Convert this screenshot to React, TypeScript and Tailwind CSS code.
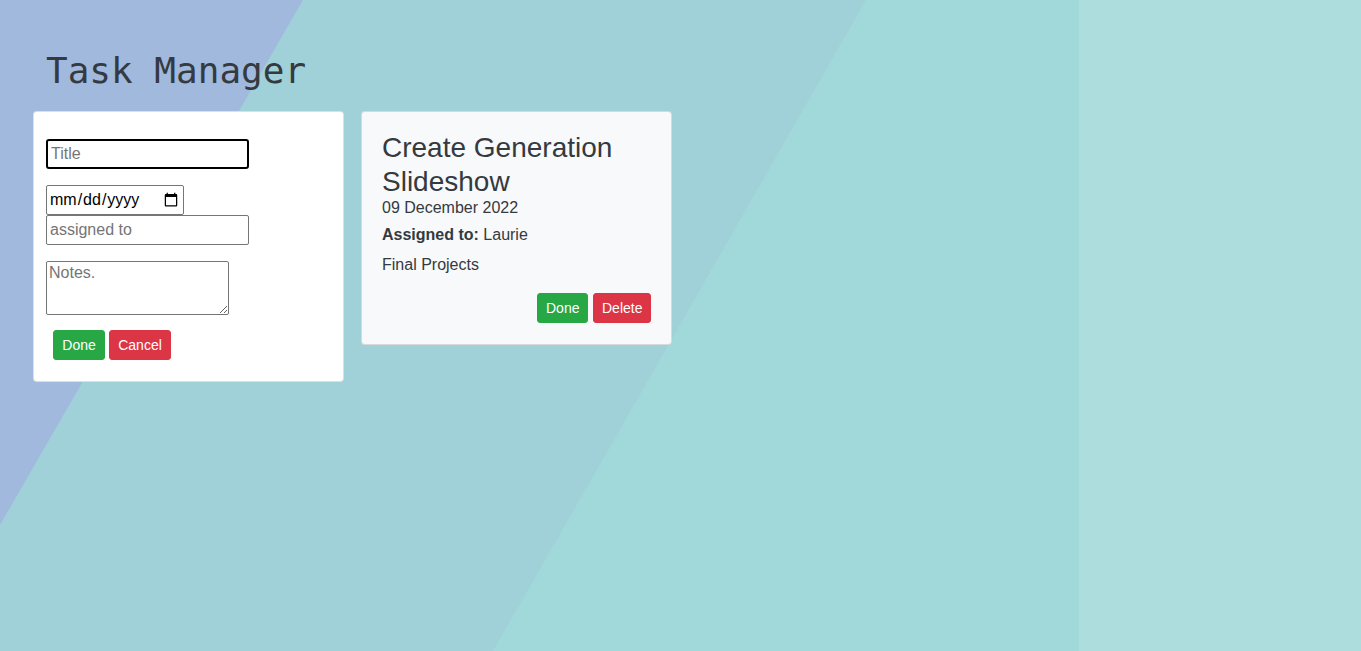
import React from 'react';

function Backdrop() {
  return (
    <svg
      className="absolute inset-0 -z-10 h-full w-full"
      viewBox="0 0 1361 651"
      preserveAspectRatio="none"
    >
      <rect x="0" y="0" width="1361" height="651" fill="#a1d8d9" />
      <polygon points="303,0 866,0 493,651 0,651 0,525" fill="#a0d1d9" />
      <polygon points="0,0 303,0 0,525" fill="#a0b9dd" />
      <rect x="1079" y="0" width="282" height="651" fill="#addedd" />
    </svg>
  );
}

function Btn({ label, tone, className = '' }: { label: string; tone: 'green' | 'red'; className?: string }) {
  return (
    <button
      className={`h-[30px] px-2 rounded-[3px] text-[14px] leading-[20px] text-white border ${
        tone === 'green' ? 'bg-[#28a745] border-[#28a745]' : 'bg-[#dc3545] border-[#dc3545]'
      } ${className}`}
    >
      {label}
    </button>
  );
}

export default function App() {
  return (
    <div className="relative isolate min-h-[651px] w-full overflow-hidden font-['Liberation_Sans',Arial,sans-serif] text-[#343a40]">
      <Backdrop />

      <h1 className="ml-[46px] pt-[49px] text-[36px] leading-[43px] font-normal font-['DejaVu_Sans_Mono',monospace] text-[#343a40]">
        Task Manager
      </h1>

      <div className="mt-[19px] ml-[33px] flex items-start gap-[17px]">
        {/* New task form */}
        <div className="w-[311px] h-[271px] bg-white border border-black/[0.125] rounded-[4px] pl-[12px] pt-[27px]">
          <input
            placeholder="Title"
            className="block w-[203px] h-[30px] border-2 border-black rounded-[3px] px-[3px] text-[16px] text-black placeholder:text-[#757575] outline-none"
          />
          <input
            type="date"
            className="block mt-[16px] w-[138px] h-[30px] border border-[#767676] rounded-[2px] px-[2px] text-[16px] text-black"
          />
          <input
            placeholder="assigned to"
            className="block w-[203px] h-[30px] border border-[#767676] rounded-[2px] px-[3px] text-[16px] text-black placeholder:text-[#757575]"
          />
          <textarea
            placeholder="Notes."
            className="block mt-[16px] w-[183px] h-[54px] border border-[#767676] rounded-[2px] px-[2px] py-[1px] text-[16px] leading-[19px] text-black placeholder:text-[#757575]"
          />
          <div className="mt-[15px] ml-[7px] flex gap-[4px]">
            <Btn label="Done" tone="green" className="w-[52px]" />
            <Btn label="Cancel" tone="red" className="w-[62px]" />
          </div>
        </div>

        {/* Task card */}
        <div className="w-[311px] bg-[#f8f9fa] border border-black/[0.125] rounded-[4px] px-[20px] pt-[19px] pb-[21px]">
          <h3 className="text-[28px] leading-[1.2] font-normal">Create Generation Slideshow</h3>
          <p className="-mt-[2px] text-[16px] leading-[24px]">09 December 2022</p>
          <p className="mt-[3px] text-[16px] leading-[24px]">
            <span className="font-bold">Assigned to:</span> Laurie
          </p>
          <p className="mt-[6px] text-[16px] leading-[24px]">Final Projects</p>
          <div className="mt-[16px] flex justify-end gap-[5px]">
            <Btn label="Done" tone="green" className="w-[51px]" />
            <Btn label="Delete" tone="red" className="w-[58px]" />
          </div>
        </div>
      </div>
    </div>
  );
}
